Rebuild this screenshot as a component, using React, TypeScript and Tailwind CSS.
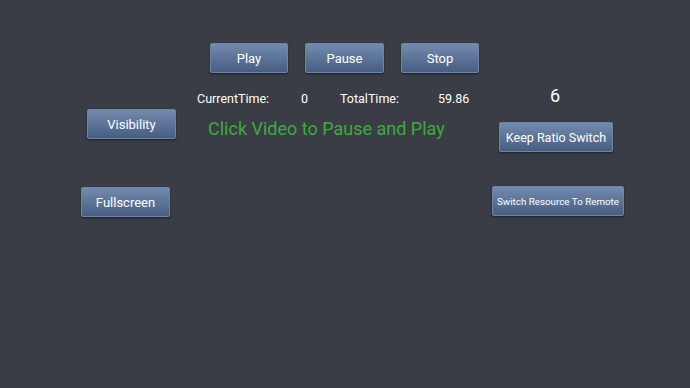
const btn =
  'flex items-center justify-center h-[30px] pt-[2px] rounded-[2px] border border-[#6f85a8] bg-gradient-to-b from-[#738bae] to-[#475e82] text-white shadow-[0_1px_2px_rgba(0,0,0,0.5)]';

const Button = ({ label, className }: { label: string; className: string }) => (
  <div className={`${btn} ${className}`}>{label}</div>
);

export default function App() {
  return (
    <div className="w-[690px] h-[388px] bg-[#3a3d45] font-['Roboto',sans-serif] overflow-hidden">
      {/* top controls */}
      <div className="flex gap-[17px] pt-[43px] pl-[210px]">
        <Button label="Play" className="w-[78px] text-[13px]" />
        <Button label="Pause" className="w-[79px] text-[13px]" />
        <Button label="Stop" className="w-[78px] text-[13px]" />
      </div>

      <div className="flex">
        {/* left */}
        <div className="flex flex-col pl-[81px] w-[176px]">
          <Button label="Visibility" className="ml-[6px] mt-[36px] w-[89px] text-[13px]" />
          <Button label="Fullscreen" className="mt-[48px] w-[89px] text-[13px]" />
        </div>

        {/* middle */}
        <div className="flex flex-col ml-[21px] w-[295px]">
          <div className="flex mt-[18px] h-[16px] items-center text-[12.5px] text-white leading-none">
            <span className="w-[104px]">CurrentTime:</span>
            <span className="w-[39px]">0</span>
            <span className="w-[98px]">TotalTime:</span>
            <span>59.86</span>
          </div>
          <div className="mt-[10px] ml-[11px] text-[18px] leading-[24px] text-[#3cab3c]">
            Click Video to Pause and Play
          </div>
        </div>

        {/* right */}
        <div className="flex flex-col">
          <div className="mt-[12px] ml-[58px] text-[18px] leading-[22px] text-white">6</div>
          <Button label="Keep Ratio Switch" className="ml-[7px] mt-[15px] w-[114px] text-[12.5px]" />
          <Button label="Switch Resource To Remote" className="mt-[34px] w-[132px] text-[9.8px]" />
        </div>
      </div>
    </div>
  );
}
